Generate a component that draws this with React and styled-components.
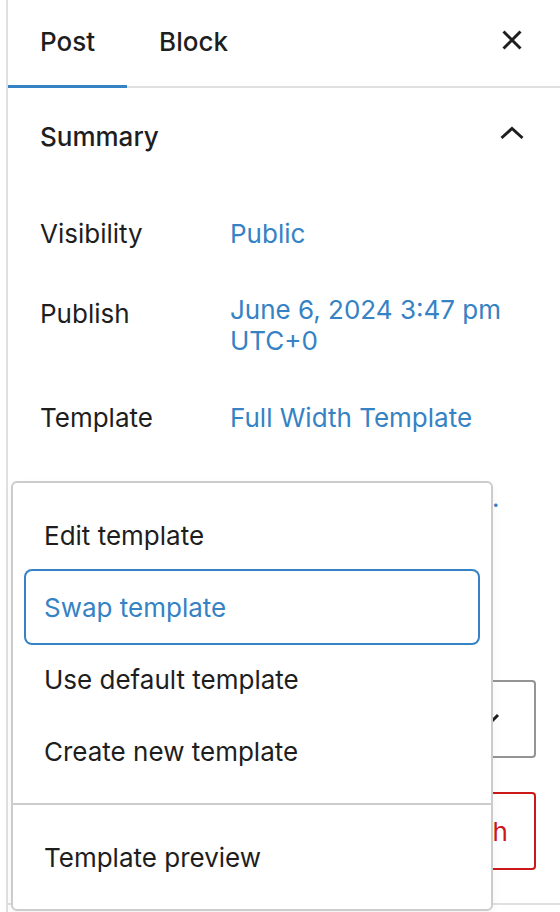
import React from 'react'
import styled, { createGlobalStyle, css } from 'styled-components'

const blue = '#3582c4'
const ink = '#1e1e1e'

const GlobalStyle = createGlobalStyle`
    html, body {
        margin: 0;
        padding: 0;
        background: #fff;
    }
    body {
        font-family: Inter, "Noto Sans", "Liberation Sans", sans-serif;
        color: ${ink};
        -webkit-font-smoothing: antialiased;
    }
`

const rows = [
    { label: 'Visibility', value: 'Public' },
    { label: 'Publish', value: 'June 6, 2024 3:47 pm UTC+0' },
    { label: 'Template', value: 'Full Width Template' },
    { label: 'URL', value: 'example.com/sample-full-width-page/', clip: true },
    { label: 'Author', value: 'admin' },
]

const menuGroups = [
    ['Edit template', 'Swap template', 'Use default template', 'Create new template'],
    ['Template preview'],
]

const App = () => {
    return (
        <Shell>
            <GlobalStyle />
            <Sidebar>
                <TabBar>
                    <Tab $active>Post</Tab>
                    <Tab>Block</Tab>
                    <IconButton aria-label='Close'>
                        <svg width='24' height='24' viewBox='0 0 24 24'>
                            <path d='M3.5 3.5l17 17M20.5 3.5l-17 17' stroke={ink} strokeWidth='3' fill='none' />
                        </svg>
                    </IconButton>
                </TabBar>

                <PanelHeader>
                    <span>Summary</span>
                    <svg width='24' height='24' viewBox='0 0 24 24'>
                        <path d='M1.5 17l10.5-9.5 10.5 9.5' stroke={ink} strokeWidth='3' fill='none' />
                    </svg>
                </PanelHeader>

                <PanelBody>
                    {rows.map((row) => (
                        <Row key={row.label}>
                            <Label>{row.label}</Label>
                            <Value $clip={row.clip}>
                                <span>{row.value}</span>
                            </Value>
                        </Row>
                    ))}

                    <SelectBox>
                        <span>Switch to draft</span>
                        <svg width='36' height='36' viewBox='0 0 36 36'>
                            <path d='M8 14l11 11 11-11' stroke={ink} strokeWidth='3' fill='none' />
                        </svg>
                    </SelectBox>

                    <ButtonRow>
                        <TrashButton>Move to trash</TrashButton>
                    </ButtonRow>
                </PanelBody>

                <NextPanel />

                <Menu role='menu'>
                    {menuGroups.map((group, i) => (
                        <MenuGroup key={i}>
                            {group.map((item) => (
                                <MenuItem key={item} $focused={item === 'Swap template'}>
                                    {item}
                                </MenuItem>
                            ))}
                        </MenuGroup>
                    ))}
                </Menu>
            </Sidebar>
        </Shell>
    )
}

const Shell = styled.div`
    height: 912px;
    padding-left: 6px;
    overflow: hidden;
    background: #fff;
`

const Sidebar = styled.aside`
    position: relative;
    height: 100%;
    border-left: 2px solid #e0e0e0;
`

const TabBar = styled.div`
    display: flex;
    align-items: stretch;
    height: 86px;
    border-bottom: 2px solid #e0e0e0;
`

const Tab = styled.div`
    position: relative;
    display: flex;
    align-items: center;
    padding: 0 32px 4px;
    font-size: 26px;
    font-weight: 500;
    color: ${ink};
    ${({ $active }) => $active && css`
        &::after{
            content:'';
            position: absolute;
            left: 0;
            right: 0;
            bottom: -2px;
            height: 3px;
            background: ${blue};
        }
    `}
`

const IconButton = styled.button`
    margin-left: auto;
    margin-right: 16px;
    width: 64px;
    border: 0;
    background: none;
    padding: 0 0 6px;
    display: flex;
    align-items: center;
    justify-content: center;
`

const PanelHeader = styled.div`
    height: 96px;
    padding: 0 36px 0 32px;
    display: flex;
    align-items: center;
    justify-content: space-between;
    font-size: 26px;
    font-weight: 500;
    svg{
        margin-top: -6px;
    }
`

const PanelBody = styled.div`
    padding: 17px 24px 33px 32px;
    display: flex;
    flex-direction: column;
    gap: 16px;
`

const Row = styled.div`
    display: flex;
    align-items: flex-start;
`

const Label = styled.div`
    flex: 0 0 190px;
    height: 64px;
    display: flex;
    align-items: center;
    font-size: 26px;
`

const Value = styled.div`
    min-width: 0;
    min-height: 64px;
    padding: 13px 0;
    box-sizing: border-box;
    display: flex;
    align-items: center;
    font-size: 26px;
    line-height: 31px;
    color: ${blue};
    ${({ $clip }) => $clip && css`
        max-width: 272px;
        span{
            white-space: nowrap;
            overflow: hidden;
            text-overflow: ellipsis;
        }
    `}
`

const SelectBox = styled.div`
    height: 78px;
    margin-top: 55px;
    box-sizing: border-box;
    border: 2px solid #949494;
    border-radius: 4px;
    padding: 0 30px 0 24px;
    display: flex;
    align-items: center;
    justify-content: space-between;
    font-size: 26px;
`

const ButtonRow = styled.div`
    display: flex;
    justify-content: flex-end;
    margin-top: 18px;
`

const TrashButton = styled.button`
    height: 78px;
    padding: 0 26px;
    border: 2px solid #cc1818;
    border-radius: 4px;
    background: #fff;
    color: #cc1818;
    font-family: inherit;
    font-size: 26px;
`

const NextPanel = styled.div`
    border-top: 2px solid #e0e0e0;
`

const Menu = styled.div`
    position: absolute;
    top: 481px;
    left: 3px;
    width: 482px;
    box-sizing: border-box;
    background: #fff;
    border: 2px solid #cccccc;
    border-radius: 6px;
    box-shadow: 0 4px 10px rgba(0, 0, 0, 0.05);
`

const MenuGroup = styled.div`
    padding: 16px 13px;
    & + &{
        border-top: 2px solid #cccccc;
    }
`

const MenuItem = styled.div`
    height: 72px;
    box-sizing: border-box;
    padding: 0 18px;
    display: flex;
    align-items: center;
    font-size: 26px;
    color: ${ink};
    border-radius: 6px;
    ${({ $focused }) => $focused && css`
        color: ${blue};
        box-shadow: 0 0 0 2px ${blue};
    `}
`

export default App
